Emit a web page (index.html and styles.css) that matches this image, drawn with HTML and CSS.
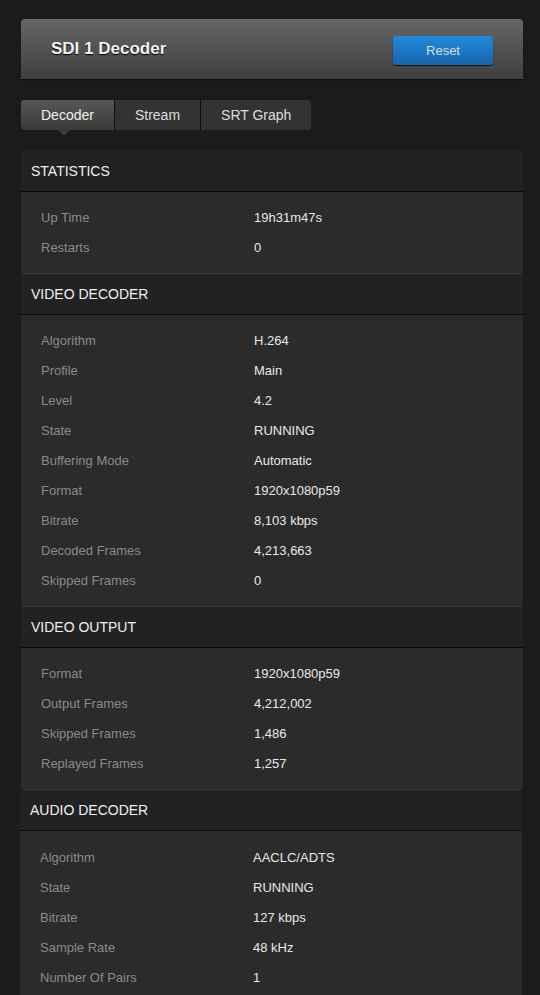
FILE: index.html
```html
<!DOCTYPE html>
<html>
<head>
<meta charset="utf-8">
<link rel="stylesheet" href="styles.css">
</head>
<body>
<div class="page">
  <div class="titlebar">
    <h1 class="title">SDI 1 Decoder</h1>
    <button class="btn">Reset</button>
  </div>
  <div class="tabs">
    <div class="tab active">Decoder</div>
    <div class="tab">Stream</div>
    <div class="tab">SRT Graph</div>
  </div>

  <div class="section">
    <div class="sec-head">STATISTICS</div>
    <div class="sec-body">
      <div class="row"><span class="lbl">Up Time</span><span class="val">19h31m47s</span></div>
      <div class="row"><span class="lbl">Restarts</span><span class="val">0</span></div>
    </div>
  </div>

  <div class="section">
    <div class="sec-head">VIDEO DECODER</div>
    <div class="sec-body">
      <div class="row"><span class="lbl">Algorithm</span><span class="val">H.264</span></div>
      <div class="row"><span class="lbl">Profile</span><span class="val">Main</span></div>
      <div class="row"><span class="lbl">Level</span><span class="val">4.2</span></div>
      <div class="row"><span class="lbl">State</span><span class="val">RUNNING</span></div>
      <div class="row"><span class="lbl">Buffering Mode</span><span class="val">Automatic</span></div>
      <div class="row"><span class="lbl">Format</span><span class="val">1920x1080p59</span></div>
      <div class="row"><span class="lbl">Bitrate</span><span class="val">8,103 kbps</span></div>
      <div class="row"><span class="lbl">Decoded Frames</span><span class="val">4,213,663</span></div>
      <div class="row"><span class="lbl">Skipped Frames</span><span class="val">0</span></div>
    </div>
  </div>

  <div class="section">
    <div class="sec-head">VIDEO OUTPUT</div>
    <div class="sec-body">
      <div class="row"><span class="lbl">Format</span><span class="val">1920x1080p59</span></div>
      <div class="row"><span class="lbl">Output Frames</span><span class="val">4,212,002</span></div>
      <div class="row"><span class="lbl">Skipped Frames</span><span class="val">1,486</span></div>
      <div class="row"><span class="lbl">Replayed Frames</span><span class="val">1,257</span></div>
    </div>
  </div>

  <div class="section shift">
    <div class="sec-head">AUDIO DECODER</div>
    <div class="sec-body">
      <div class="row"><span class="lbl">Algorithm</span><span class="val">AACLC/ADTS</span></div>
      <div class="row"><span class="lbl">State</span><span class="val">RUNNING</span></div>
      <div class="row"><span class="lbl">Bitrate</span><span class="val">127 kbps</span></div>
      <div class="row"><span class="lbl">Sample Rate</span><span class="val">48 kHz</span></div>
      <div class="row"><span class="lbl">Number Of Pairs</span><span class="val">1</span></div>
    </div>
  </div>
</div>
</body>
</html>
```

FILE: styles.css
```css
html, body {
  margin: 0;
  padding: 0;
  background: #1b1b1b;
  font-family: "Liberation Sans", Arial, sans-serif;
}
.page {
  padding: 19px 17px 0 21px;
}
.titlebar {
  height: 60px;
  display: flex;
  align-items: center;
  justify-content: space-between;
  padding: 0 30px;
  border-radius: 4px 4px 0 0;
  background: linear-gradient(#666666, #3f3f3f);
  box-shadow: 0 1px 1px rgba(0,0,0,0.6);
  margin-bottom: 21px;
}
.title {
  margin: 0;
  font-size: 17px;
  font-weight: bold;
  color: #f2f2f2;
  text-shadow: 0 1px 1px #000;
}
.btn {
  width: 100px;
  height: 29px;
  margin-top: 3px;
  border: none;
  border-radius: 4px;
  background: linear-gradient(#2189dc, #1766ad);
  color: #dcdcdc;
  font-family: "Liberation Sans", Arial, sans-serif;
  font-size: 13px;
  box-shadow: 0 1px 1px rgba(0,0,0,0.8);
  padding: 0;
}
.tabs {
  display: flex;
  height: 30px;
  margin-bottom: 21px;
}
.tab {
  position: relative;
  padding: 0 20px;
  line-height: 30px;
  font-size: 14px;
  color: #dddddd;
  background: #333333;
  border-right: 1px solid #0f0f0f;
}
.tab:first-child { border-radius: 4px 0 0 4px; }
.tab:last-child { border-radius: 0 4px 4px 0; border-right: none; }
.tab.active {
  background: linear-gradient(#575757, #3a3a3a);
  color: #f0f0f0;
}
.tab.active::after {
  content: "";
  position: absolute;
  left: 37px;
  top: 30px;
  border-left: 6px solid transparent;
  border-right: 6px solid transparent;
  border-top: 6px solid #3a3a3a;
}
.section.shift {
  margin-left: -1px;
  margin-right: 1px;
}
.section.shift .sec-body {
  padding-top: 11px;
}
.sec-head {
  height: 40px;
  line-height: 40px;
  padding-left: 10px;
  background: #222222;
  color: #f0f0f0;
  font-size: 14px;
  border-bottom: 1px solid #0a0a0a;
}
.sec-body {
  background: #2b2b2b;
  padding: 10px 0 11px;
  border-bottom: 1px solid #383838;
  border-radius: 0 0 4px 4px;
}
.row {
  display: grid;
  grid-template-columns: 213px 1fr;
  height: 30px;
  align-items: center;
  padding-left: 20px;
  font-size: 13px;
}
.lbl { color: #8a8a8a; }
.val { color: #e8e8e8; }
```
